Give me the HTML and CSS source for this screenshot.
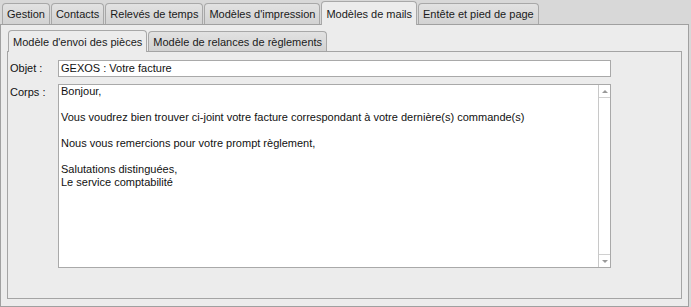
FILE: index.html
```html
<!DOCTYPE html>
<html lang="fr">
<head>
  <meta charset="UTF-8" />
  <title>Modèles de mails</title>
  <link rel="stylesheet" href="styles.css">
</head>
<body>

  <div class="window">
    <div class="tabs">
      <div class="tab">Gestion</div>
      <div class="tab">Contacts</div>
      <div class="tab">Relevés de temps</div>
      <div class="tab">Modèles d'impression</div>
      <div class="tab active">Modèles de mails</div>
      <div class="tab">Entête et pied de page</div>
    </div>

    <div class="panel">
      <div class="subtabs">
        <div class="tab active">Modèle d'envoi des pièces</div>
        <div class="tab">Modèle de relances de règlements</div>
      </div>

      <div class="subpanel">
        <div class="row">
          <label class="label">Objet :</label>
          <div class="field">GEXOS : Votre facture</div>
        </div>
        <div class="row">
          <label class="label">Corps :</label>
          <div class="area">
            <div class="area-text">Bonjour,

Vous voudrez bien trouver ci-joint votre facture correspondant à votre dernière(s) commande(s)

Nous vous remercions pour votre prompt règlement,

Salutations distinguées,
Le service comptabilité</div>
            <div class="scrollbar">
              <span class="arrow up"></span>
              <span class="track"></span>
              <span class="arrow down"></span>
            </div>
          </div>
        </div>
      </div>
    </div>
  </div>

</body>
</html>
```

FILE: styles.css
```css
body {
  margin: 0;
  font-family: 'Liberation Sans', Arial, sans-serif;
  font-size: 11px;
  color: #111;
  background: #d8d8d8;
}

.window {
  width: 691px;
  height: 307px;
  display: flex;
  flex-direction: column;
}

.tabs {
  display: flex;
  align-items: flex-end;
  height: 24px;
  padding-left: 2px;
  position: relative;
  z-index: 1;
}

.tab {
  height: 20px;
  line-height: 20px;
  padding: 0 4px;
  margin-right: 1px;
  border: 1px solid #a8a8a8;
  border-bottom: none;
  border-radius: 4px 4px 0 0;
  background: linear-gradient(#e2e2e2, #d2d2d2);
  color: #1a1a1a;
  white-space: nowrap;
}

.tab.active {
  height: 23px;
  line-height: 24px;
  margin-bottom: -1px;
  background: #ececec;
}

.panel {
  flex: 1;
  margin-right: 2px;
  border: 1px solid #a0a0a0;
  background: #ececec;
  display: flex;
  flex-direction: column;
  padding: 0 6px 7px 6px;
}

.subtabs {
  display: flex;
  align-items: flex-end;
  height: 26px;
  padding-left: 1px;
  position: relative;
  z-index: 1;
}

.subtabs .tab {
  height: 19px;
  line-height: 20px;
}

.subtabs .tab.active {
  height: 21px;
  line-height: 22px;
}

.subpanel {
  flex: 1;
  border: 1px solid #a4a4a4;
  background: #ececec;
  padding: 8px 0 0 2px;
}

.row {
  display: flex;
  margin-bottom: 7px;
}

.label {
  width: 48px;
  padding-top: 2px;
}

.field {
  width: 547px;
  height: 15px;
  line-height: 15px;
  padding: 0 2px;
  border: 1px solid #a9a9a9;
  background: #fff;
}

.area {
  width: 551px;
  height: 182px;
  border: 1px solid #a9a9a9;
  background: #fff;
  display: flex;
}

.area-text {
  flex: 1;
  padding: 0 2px;
  line-height: 13px;
  white-space: pre-line;
}

.scrollbar {
  width: 11px;
  border-left: 1px solid #c8c8c8;
  display: flex;
  flex-direction: column;
}

.track {
  flex: 1;
}

.arrow {
  height: 12px;
  position: relative;
}

.arrow.up {
  border-bottom: 1px solid #d0d0d0;
}

.arrow.down {
  border-top: 1px solid #d0d0d0;
}

.arrow::after {
  content: '';
  position: absolute;
  left: 3px;
  top: 5px;
  border-left: 3px solid transparent;
  border-right: 3px solid transparent;
}

.arrow.up::after {
  border-bottom: 3px solid #999;
}

.arrow.down::after {
  border-top: 3px solid #999;
}
```
